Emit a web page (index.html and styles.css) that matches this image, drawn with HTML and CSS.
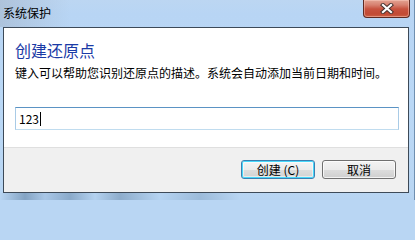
FILE: index.html
```html
<!DOCTYPE html>
<html lang="zh-CN">
<head>
<meta charset="utf-8">
<title>系统保护</title>
<link rel="stylesheet" href="styles.css">
</head>
<body>
<div class="window">
  <div class="titlebar">
    <span class="title">系统保护</span>
    <button class="close" aria-label="关闭">
      <svg width="14" height="11" viewBox="0 0 14 11">
        <path d="M3 2 L11 9 M11 2 L3 9" stroke="#4a3430" stroke-width="4.2" stroke-linecap="square" fill="none"/>
        <path d="M3 2 L11 9 M11 2 L3 9" stroke="#ffffff" stroke-width="2.2" stroke-linecap="square" fill="none"/>
      </svg>
    </button>
  </div>
  <div class="panel">
    <div class="content">
      <h1 class="heading">创建还原点</h1>
      <p class="desc">键入可以帮助您识别还原点的描述。系统会自动添加当前日期和时间。</p>
      <div class="textbox"><span class="value">123</span><span class="caret"></span></div>
    </div>
    <div class="footer">
      <button class="btn btn-default">创建 (C)</button>
      <button class="btn">取消</button>
    </div>
  </div>
  <div class="bottom-edge"></div>
</div>
</body>
</html>
```

FILE: styles.css
```css
* { box-sizing: border-box; }
html {
  margin: 0;
  padding: 0;
  background: #b9d6f3;
}
body {
  margin: 0;
  padding: 0;
  width: 415px;
  height: 200px;
  overflow: hidden;
  font-family: "Noto Sans CJK SC", "Noto Sans", sans-serif;
  font-size: 12px;
}
.window {
  width: 415px;
  height: 200px;
  display: flex;
  flex-direction: column;
  background: linear-gradient(180deg, #bcd6f2 0px, #b8d5f4 14px, #bad8f6 100px, #b9d6f3 192px, #a9c6e6 200px);
  border-right: 1px solid #6f8fb0;
}
.titlebar {
  height: 27px;
  display: flex;
  align-items: flex-start;
  background: linear-gradient(90deg, rgba(150,160,175,0.35) 0px, rgba(150,160,175,0) 70px);
}
.title {
  padding: 4px 0 0 3px;
  line-height: 17px;
  font-size: 12px;
  color: #000;
}
.close {
  margin: 0 4px 0 auto;
  width: 47px;
  height: 18px;
  padding: 0;
  border: 1px solid #5e2a22;
  border-top: none;
  border-radius: 0 0 4px 4px;
  background: linear-gradient(180deg, #e3a392 0px, #d78170 5px, #c7523e 9px, #c24a34 14px, #cf6a4c 18px);
  box-shadow: inset 0 0 0 1px rgba(255,210,200,0.45);
  display: flex;
  align-items: center;
  justify-content: center;
}
.close svg { display: block; margin-top: -1px; }
.panel {
  margin: 0 5px 0 3px;
  height: 166px;
  flex: none;
  border: 1px solid #3d4a58;
  display: flex;
  flex-direction: column;
}
.content {
  background: #fff;
  padding: 12px 9px 17px 11px;
  border-bottom: 1px solid #dfdfdf;
}
.heading {
  margin: 0;
  font-size: 16px;
  line-height: 20px;
  font-weight: normal;
  color: #1a3aa6;
}
.desc {
  margin: 5px 0 0 0;
  font-size: 12px;
  line-height: 16px;
  color: #000;
}
.textbox {
  margin-top: 26px;
  height: 23px;
  border: 1px solid #a9cbe6;
  border-top-color: #5b93c4;
  border-bottom-color: #c0dcef;
  display: flex;
  align-items: center;
  padding-left: 3px;
  font-size: 12px;
  color: #000;
}
.caret {
  width: 1px;
  height: 14px;
  background: #000;
  margin-left: 1px;
}
.footer {
  flex: 1;
  background: #f0f0f0;
  display: flex;
  justify-content: flex-end;
  align-items: flex-start;
  gap: 7px;
  padding: 12px 12px 0 0;
}
.btn {
  width: 74px;
  height: 19px;
  padding: 0;
  margin: 0;
  font-family: "Noto Sans CJK SC", "Noto Sans", sans-serif;
  font-size: 12px;
  line-height: 15px;
  color: #000;
  border: 1px solid #707070;
  border-radius: 3px;
  background: linear-gradient(180deg, #f3f3f3 0%, #ebebeb 50%, #dddddd 51%, #cfcfcf 100%);
  box-shadow: inset 0 0 0 1px rgba(255,255,255,0.75);
}
.btn-default {
  border-color: #3c7fb1;
  background: linear-gradient(180deg, #f4f4f4 0%, #ececec 50%, #dedede 51%, #d2d2d2 100%);
  box-shadow: inset 0 0 0 1px #48d8fb, inset 0 0 0 2px rgba(255,255,255,0.5);
}
.bottom-edge {
  flex: 1;
  background: linear-gradient(90deg, #b9d6f3 0px, #7f9fbf 25px, #a8c6e6 45px, #86a6c6 70px, #b4d2f0 95px, #8aa9c8 120px, #b6d4f2 160px, #9ab9d8 200px, #b9d6f3 240px, #b9d6f3 415px);
  opacity: 0.9;
}
```
